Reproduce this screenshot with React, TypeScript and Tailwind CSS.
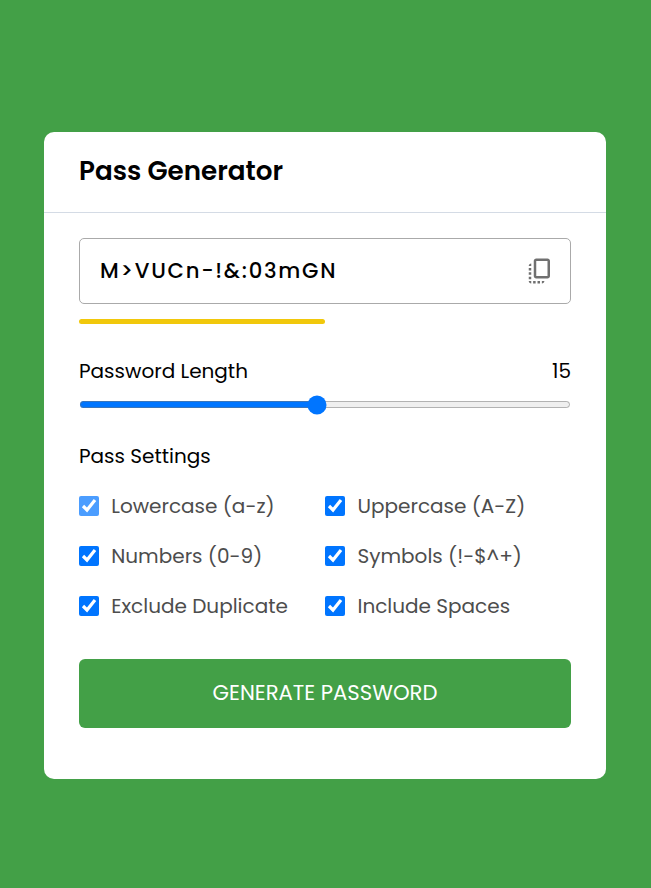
import React from "react";

const boxes = ["Lowercase (a-z)", "Uppercase (A-Z)", "Numbers (0-9)", "Symbols (!-$^+)", "Exclude Duplicate", "Include Spaces"];

export default function App() {
  return (
    <main className="flex h-[888px] items-start bg-[#43a047] pl-11 pt-[132px] font-['Poppins','Open_Sans',sans-serif] text-black">
      <section className="h-[647px] w-[562px] rounded-[10px] bg-white">
        <h2 className="flex h-[81px] items-center border-b border-[#d4dbe5] px-[35px] pb-[2px] text-[26.2px] font-semibold">
          <span className="whitespace-nowrap">Pass Generator</span>
        </h2>
        <div className="px-[35px] pt-[25px]">
          <div className="flex h-[66px] items-center justify-between rounded-[5px] border border-[#aaa] pl-5 pr-[15px]">
            <span className="text-[21.2px] font-medium tracking-[1.75px]">{"M>VUCn-!&:03mGN"}</span>
            <svg className="size-[30px]" viewBox="0 0 24 24" fill="#707070"><path d="M18 2H9c-1.1 0-2 .9-2 2v12c0 1.1.9 2 2 2h9c1.1 0 2-.9 2-2V4c0-1.1-.9-2-2-2zm0 14H9V4h9v12zM3 15v-2h2v2H3zm0-5.5h2v2H3v-2zM10 20h2v2h-2v-2zm-7-1.5v-2h2v2H3zM5 22c-1.1 0-2-.9-2-2h2v2zm3.5 0h-2v-2h2v2zm5 0v-2h2c0 1.1-.9 2-2 2zM5 6v2H3c0-1.1.9-2 2-2z" /></svg>
          </div>
          <div className="mt-[15px] h-[5px] w-[246px] rounded-full bg-[#f1c80b]" />
          <div className="mt-8 flex h-[30px] items-center justify-between text-[20px]"><span>Password Length</span><span>15</span></div>
          <div className="mt-[11px] flex h-[15px] items-center">
            <input type="range" min={1} max={30} defaultValue={15} className="block h-[5.6px] w-full [zoom:1.25]" />
          </div>
          <div className="mt-[29px] h-[30px] text-[20px]">Pass Settings</div>
          <div className="mt-5 grid grid-cols-2 gap-y-5">
            {boxes.map((b, i) => (
              <label key={b} className="flex h-[30px] items-center text-[20px] text-[#4d4d4d]">
                <input type="checkbox" defaultChecked className={i ? "size-5" : "size-5 opacity-70"} />
                <span className={i % 2 ? "pl-[12.5px]" : "pl-[12.25px]"}>{b}</span>
              </label>
            ))}
          </div>
          <button className="mt-[38px] h-[69px] w-full rounded-[6px] bg-[#43a047] pb-[2px] text-[21.2px] text-white">GENERATE PASSWORD</button>
        </div>
      </section>
    </main>
  );
}
